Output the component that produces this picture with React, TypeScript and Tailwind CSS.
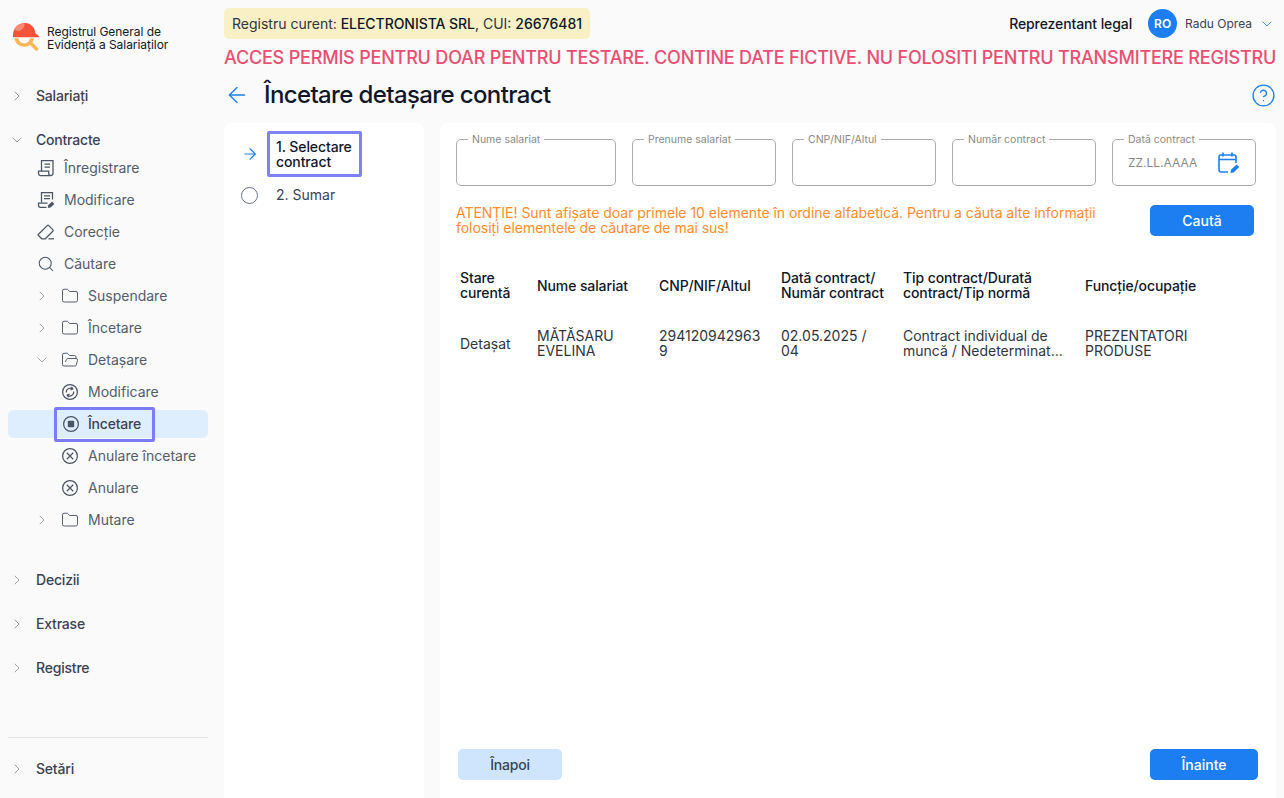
import React from "react";
import { ChevronRight, ChevronDown, ArrowLeft, ArrowRight, CircleHelp, Search, Folder, FolderOpen } from "lucide-react";

const iconCls = "w-[18px] h-[18px] text-[#4b5563] shrink-0";

function Logo() {
  return (
    <svg width="28" height="28" viewBox="0 0 28 28" className="shrink-0">
      <path d="M1 14 C0.5 5 6 0 13 0 C19 0 23 5 23.5 10.5 L27 13 C27.5 13.6 27.3 14.2 26.5 14.2 L1.6 14.2 C1.2 14.2 1 14.1 1 14 Z" fill="#f4523b" />
      <path d="M3 5 C5 2 9 0.2 12.5 0.2 C13 4 10 7.5 6.5 8 C4 8.3 2.2 7 3 5 Z" fill="#f88a76" />
      <path d="M2.5 15.3 C3 21 8 23.8 12.8 23.8 C18 23.8 21.2 20 21.7 15.3 L18 15.3 C17.5 18.3 15.5 20.3 12.5 20.3 C9 20.3 7 18.3 6.5 15.3 Z" fill="#fbb756" />
      <path d="M18.5 20 L24.5 26" stroke="#fbb756" strokeWidth="3.4" strokeLinecap="round" fill="none" />
    </svg>
  );
}

function ScrollIcon() {
  return (
    <svg viewBox="0 0 18 18" fill="none" stroke="currentColor" strokeWidth="1.25" className={iconCls}>
      <path d="M4.5 11.5 V1.5 H16 V14 C16 15.4 15 16.5 13.7 16.5 H3.5 C2.2 16.5 1.5 15.5 1.5 14 V12 H11.7 V14.2 C11.7 15.4 12.6 16.5 13.7 16.5" />
      <path d="M7.5 5 H13 M7.5 8 H13" />
    </svg>
  );
}
function EditDocIcon() {
  return (
    <svg viewBox="0 0 18 18" fill="none" stroke="currentColor" strokeWidth="1.25" className={iconCls}>
      <path d="M4.5 11.5 V1.5 H15.5 V8.5" />
      <path d="M7 4.8 H13 M7 7.7 H13" />
      <path d="M10.5 12 H1.5 V14.3 C1.5 15.5 2.2 16.4 3.5 16.4 H9.5" />
      <path d="M10.8 17 L11.2 14.3 L15 10.6 L17.4 12.9 L13.6 16.6 Z" fill="currentColor" stroke="none" />
    </svg>
  );
}
function EraserIcon() {
  return (
    <svg viewBox="0 0 18 18" fill="none" stroke="currentColor" strokeWidth="1.25" className={iconCls}>
      <path d="M1 11.8 L10.2 2.6 C10.7 2.1 11.3 2.1 11.8 2.6 L15.8 6.6 C16.3 7.1 16.3 7.8 15.8 8.3 L8.3 15.8 H4.8 L1 12 Z" />
      <path d="M11.5 15.8 H17" />
    </svg>
  );
}
function SyncCircleIcon() {
  return (
    <svg viewBox="0 0 18 18" fill="none" stroke="currentColor" strokeWidth="1.25" className={iconCls}>
      <circle cx="9" cy="9" r="7.4" />
      <path d="M5.3 9.5 C5 7 7 5 9.2 5 C10 5 10.8 5.3 11.4 5.8" />
      <path d="M12.7 8.5 C13 11 11 13 8.8 13 C8 13 7.2 12.7 6.6 12.2" />
      <path d="M10.5 3.8 L11.8 6 L9.5 6.8 M7.5 14.2 L6.2 12 L8.5 11.2" />
    </svg>
  );
}
function StopCircleIcon() {
  return (
    <svg viewBox="0 0 18 18" fill="none" stroke="currentColor" strokeWidth="1.25" className={iconCls}>
      <circle cx="9" cy="9" r="7.4" />
      <rect x="5.8" y="5.8" width="6.4" height="6.4" rx="0.8" fill="currentColor" stroke="none" />
    </svg>
  );
}
function XCircleIcon() {
  return (
    <svg viewBox="0 0 18 18" fill="none" stroke="currentColor" strokeWidth="1.25" className={iconCls}>
      <circle cx="9" cy="9" r="7.4" />
      <path d="M5.8 5.8 L12.2 12.2 M12.2 5.8 L5.8 12.2" />
    </svg>
  );
}
function CalendarIcon() {
  return (
    <svg viewBox="0 0 22 22" fill="none" stroke="#1c7ef0" strokeWidth="1.6" className="w-[22px] h-[22px] shrink-0">
      <path d="M10 20 H3 C2 20 1 19 1 18 V5 C1 4 2 3 3 3 H16 C17 3 18 4 18 5 V11" />
      <path d="M1 7.5 H18 M5 0.5 V4.5 M14 0.5 V4.5" />
      <path d="M12.5 21 L13 17.8 L18.5 12.5 L21.2 15 L15.6 20.4 Z" fill="#1c7ef0" stroke="none" />
    </svg>
  );
}

function Top({ open, label }: { open?: boolean; label: string }) {
  const C = open ? ChevronDown : ChevronRight;
  return (
    <div className="flex items-center h-8 pl-px">
      <C className="w-4 h-4 text-[#8c8f94] mr-[11px]" strokeWidth={1.25} />
      <span className="text-sm font-medium text-[#3a4254] tracking-[-0.2px]">{label}</span>
    </div>
  );
}
function Sub({ icon, label }: { icon: React.ReactNode; label: string }) {
  return (
    <div className="flex items-center h-8 pl-[29px] gap-[9px] text-sm text-[#545c6b]">
      {icon}
      <span>{label}</span>
    </div>
  );
}
function Nested({ icon, label, chev }: { icon: React.ReactNode; label: string; chev?: "r" | "d" }) {
  return (
    <div className="flex items-center h-8 pl-[26px] text-sm text-[#545c6b]">
      <span className="w-[27px] shrink-0 flex">
        {chev === "r" && <ChevronRight className="w-4 h-4 text-[#8c8f94]" strokeWidth={1.25} />}
        {chev === "d" && <ChevronDown className="w-4 h-4 text-[#8c8f94]" strokeWidth={1.25} />}
      </span>
      {icon}
      <span className="ml-[9px]">{label}</span>
    </div>
  );
}

function Field({ label, width, children }: { label: string; width: string; children?: React.ReactNode }) {
  return (
    <fieldset className={`${width} h-[53px] border border-[#ababab] rounded-[5px] px-[11px] pb-[5px] flex items-center min-w-0`}>
      <legend className="text-[10.5px] leading-[13px] text-[#8a8a8a] px-1">{label}</legend>
      {children}
    </fieldset>
  );
}

const cols = "grid grid-cols-[77px_122px_122px_122px_182px_171px] px-1 text-sm leading-[15px]";

export default function App() {
  return (
    <div className="w-[1284px] h-[798px] flex overflow-hidden bg-[#fafafa] font-['Inter',sans-serif] text-[#0f172a]">
      <aside className="w-[224px] shrink-0 flex flex-col pl-2 pr-4">
        <div className="flex items-start h-[72px] pt-[23px] pl-1">
          <Logo />
          <div className="text-xs leading-[13px] text-[#101828] ml-[7px] mt-[2px] tracking-[-0.05px]">Registrul General de<br />Evidență a Salariaților</div>
        </div>
        <div className="mt-2"><Top label="Salariați" /></div>
        <div className="mt-3 mb-[-4px]"><Top open label="Contracte" /></div>
        <Sub icon={<ScrollIcon />} label="Înregistrare" />
        <Sub icon={<EditDocIcon />} label="Modificare" />
        <Sub icon={<EraserIcon />} label="Corecție" />
        <Sub icon={<Search className={iconCls} strokeWidth={1.4} />} label="Căutare" />
        <Nested chev="r" icon={<Folder className={iconCls} strokeWidth={1.25} />} label="Suspendare" />
        <Nested chev="r" icon={<Folder className={iconCls} strokeWidth={1.25} />} label="Încetare" />
        <Nested chev="d" icon={<FolderOpen className={iconCls} strokeWidth={1.25} />} label="Detașare" />
        <Nested icon={<SyncCircleIcon />} label="Modificare" />
        <div className="h-8 flex items-center">
          <div className="w-full h-7 bg-[#dfeeff] rounded-md flex items-center pl-[46px]">
            <div className="h-[35px] w-[101px] shrink-0 flex items-center pl-[5px] border-[3px] border-[#7c7cf5] rounded-[2px] text-sm font-medium text-[#3a4254] gap-2 tracking-[-0.2px]">
              <StopCircleIcon />
              <span>Încetare</span>
            </div>
          </div>
        </div>
        <Nested icon={<XCircleIcon />} label="Anulare încetare" />
        <Nested icon={<XCircleIcon />} label="Anulare" />
        <Nested chev="r" icon={<Folder className={iconCls} strokeWidth={1.25} />} label="Mutare" />
        <div className="mt-[28px]"><Top label="Decizii" /></div>
        <div className="mt-3"><Top label="Extrase" /></div>
        <div className="mt-3"><Top label="Registre" /></div>
        <div className="mt-auto border-t border-[#e2e3e5] pt-[15px] pb-[13px]"><Top label="Setări" /></div>
      </aside>

      <main className="flex-1 min-w-0 flex flex-col pr-2">
        <header className="flex items-start justify-between h-[39px] pt-2">
          <div className="h-[31px] bg-[#f9f1c5] rounded-[5px] px-2 flex items-center text-sm text-[#30353f]">
            <span>Registru curent:&nbsp;</span>
            <span className="font-medium text-[#0f172a] tracking-[-0.05px]">ELECTRONISTA SRL</span>
            <span>, CUI:&nbsp;</span>
            <span className="font-medium text-[#0f172a]">26676481</span>
          </div>
          <div className="flex items-center h-[31px] pr-px">
            <span className="text-sm font-medium text-[#0f172a] mr-4 tracking-[-0.1px]">Reprezentant legal</span>
            <span className="w-[29px] h-[29px] rounded-full bg-[#1c7ef0] text-white text-xs font-semibold flex items-center justify-center mr-2">RO</span>
            <span className="text-xs text-[#3a4254]">Radu Oprea</span>
            <ChevronDown className="w-4 h-4 ml-[7px] text-[#1c7ef0]" strokeWidth={1.25} />
          </div>
        </header>
        <div className="text-lg font-medium leading-[20px] mt-[9px] text-[#e84f72] whitespace-nowrap tracking-[-0.19px]">ACCES PERMIS PENTRU DOAR PENTRU TESTARE. CONTINE DATE FICTIVE. NU FOLOSITI PENTRU TRANSMITERE REGISTRU</div>
        <div className="flex items-center h-[36px] mt-[9px] mb-[10px]">
          <ArrowLeft className="w-[26px] h-[26px] text-[#1c7ef0] shrink-0" strokeWidth={1.25} />
          <h1 className="text-2xl font-medium text-[#0f172a] ml-[14px] tracking-[-0.62px]">Încetare detașare contract</h1>
          <CircleHelp className="w-[25px] h-[25px] ml-auto text-[#1c7ef0]" strokeWidth={1.25} />
        </div>
        <div className="flex-1 flex gap-4 min-h-0 min-w-0">
          <section className="w-[200px] shrink-0 bg-white rounded-t-lg pt-2">
            <div className="flex items-center">
              <ArrowRight className="w-[18px] h-[18px] text-[#1c7ef0] ml-[17px] shrink-0" strokeWidth={1.5} />
              <div className="ml-[8px] border-[3px] border-[#8080f8] rounded-[2px] px-[6px] h-[46px] flex items-center text-sm leading-[15px] font-medium w-[95px] text-[#0f172a] tracking-[-0.1px]">1. Selectare contract</div>
            </div>
            <div className="flex items-center mt-[2px] h-8">
              <span className="w-[17px] h-[17px] rounded-full border border-[#6b7280] ml-[17px] shrink-0"></span>
              <span className="ml-[18px] text-sm text-[#3a4254]">2. Sumar</span>
            </div>
          </section>
          <section className="flex-1 min-w-0 bg-white rounded-t-lg pl-4 pr-[18px] pb-[18px] flex flex-col">
            <div className="flex gap-4 mt-[10px]">
              <Field label="Nume salariat" width="w-[160px]" />
              <Field label="Prenume salariat" width="w-[144px]" />
              <Field label="CNP/NIF/Altul" width="w-[144px]" />
              <Field label="Număr contract" width="w-[144px]" />
              <Field label="Dată contract" width="w-[144px]">
                <span className="text-xs text-[#8a8a8a] flex-1 pl-1">ZZ.LL.AAAA</span>
                <span className="mr-[4px] flex"><CalendarIcon /></span>
              </Field>
            </div>
            <div className="flex items-start justify-between mt-[19px] pr-[4px]">
              <p className="w-[680px] text-sm leading-[15px] text-[#ff8c2e] tracking-[-0.03px]">ATENȚIE! Sunt afișate doar primele 10 elemente în ordine alfabetică. Pentru a căuta alte informații folosiți elementele de căutare de mai sus!</p>
              <button className="w-[104px] h-[31px] rounded-[5px] bg-[#1c7ef0] text-white text-sm font-medium">Caută</button>
            </div>
            <div className={`${cols} mt-[28px] font-medium text-[#0f172a] items-center h-[42px] tracking-[-0.1px]`}>
              <div>Stare curentă</div>
              <div>Nume salariat</div>
              <div>CNP/NIF/Altul</div>
              <div>Dată contract/ Număr contract</div>
              <div>Tip contract/Durată contract/Tip normă</div>
              <div>Funcție/ocupație</div>
            </div>
            <div className={`${cols} mt-[22px] text-[#30353f] items-center h-[30px]`}>
              <div>Detașat</div>
              <div className="pr-4">MĂTĂSARU EVELINA</div>
              <div className="break-all pr-4">2941209429639</div>
              <div className="pr-4">02.05.2025 / 04</div>
              <div className="pr-4">Contract individual de muncă / Nedeterminat...</div>
              <div className="pr-4">PREZENTATORI PRODUSE</div>
            </div>
            <div className="mt-auto flex justify-between pl-[2px]">
              <button className="w-[104px] h-[31px] rounded-[5px] bg-[#cfe5fd] text-[#3a4254] text-sm font-medium tracking-[-0.2px]">Înapoi</button>
              <button className="w-[108px] h-[31px] rounded-[5px] bg-[#1c7ef0] text-white text-sm font-medium">Înainte</button>
            </div>
          </section>
        </div>
      </main>
    </div>
  );
}
